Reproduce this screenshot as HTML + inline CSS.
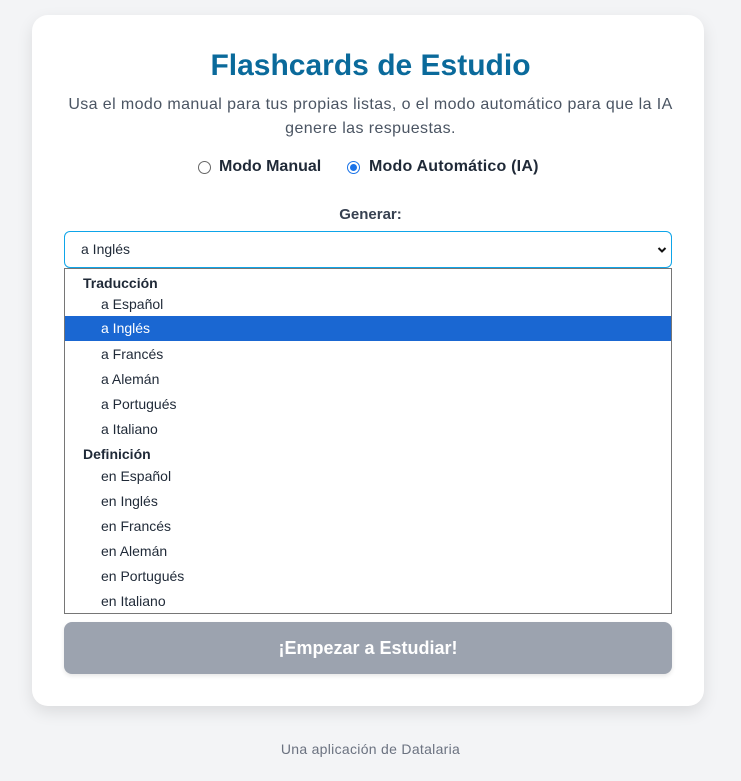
<!DOCTYPE html>
<html><head><meta charset="utf-8"><style>
*{margin:0;padding:0;box-sizing:border-box}
body{width:741px;height:781px;background:#f3f4f6;font-family:"Liberation Sans",sans-serif;position:relative;overflow:hidden}
.card{position:absolute;left:32px;top:15px;width:672px;height:691px;background:#fff;border-radius:16px;box-shadow:0 6px 16px rgba(0,0,0,0.1)}
.a{position:absolute;white-space:nowrap}
.c{left:0;width:741px;text-align:center}
.dd{position:absolute;left:64px;top:268px;width:608px;height:346px;border:1px solid #767676;background:#fff}
.o{position:absolute;left:36px;font-size:14px;color:#1f2937;line-height:20px}
.g{position:absolute;left:18px;font-size:14px;font-weight:bold;color:#1f2937;line-height:20px}
.hl{position:absolute;left:0;top:47px;width:606px;height:25px;background:#1a67d2}
</style></head><body>
<div class="card"></div>
<div class="a c" style="top:46px;font-size:30px;font-weight:bold;color:#0a6a9b;line-height:40px">Flashcards de Estudio</div>
<div class="a c" style="top:93px;font-size:16px;color:#4b5563;line-height:24px;letter-spacing:0.4px">Usa el modo manual para tus propias listas, o el modo automático para que la IA<br>genere las respuestas.</div>
<div class="a" style="left:198px;top:161px;width:13px;height:13px;border:1px solid #666;border-radius:50%"></div>
<div class="a" style="left:219px;top:157px;font-size:16px;font-weight:bold;color:#1f2937;line-height:20px">Modo Manual</div>
<div class="a" style="left:347px;top:161px;width:13px;height:13px;border:1px solid #1a73e8;border-radius:50%"><div style="position:absolute;left:2px;top:2px;width:7px;height:7px;background:#1a73e8;border-radius:50%"></div></div>
<div class="a" style="left:369px;top:157px;font-size:16px;font-weight:bold;color:#1f2937;line-height:20px;letter-spacing:0.2px">Modo Automático (IA)</div>
<div class="a c" style="top:205px;font-size:15px;font-weight:bold;color:#374151;line-height:20px">Generar:</div>
<div class="a" style="left:64px;top:231px;width:608px;height:37px;border:1px solid #0ea5e9;border-radius:6px;background:#fff">
<span style="position:absolute;left:16px;top:9px;font-size:14px;color:#1f2937">a Inglés</span>
<svg style="position:absolute;right:4px;top:14px" width="10" height="8" viewBox="0 0 10 8"><path d="M1.5 2 L5 5.5 L8.5 2" stroke="#111" stroke-width="2" fill="none"/></svg>
</div>
<div class="dd">
<div class="hl"></div>
<div class="g" style="top:4px">Traducción</div>
<div class="o" style="top:25px">a Español</div>
<div class="o" style="top:49px;color:#fff">a Inglés</div>
<div class="o" style="top:75px">a Francés</div>
<div class="o" style="top:100px">a Alemán</div>
<div class="o" style="top:125px">a Portugués</div>
<div class="o" style="top:150px">a Italiano</div>
<div class="g" style="top:175px">Definición</div>
<div class="o" style="top:197px">en Español</div>
<div class="o" style="top:222px">en Inglés</div>
<div class="o" style="top:247px">en Francés</div>
<div class="o" style="top:272px">en Alemán</div>
<div class="o" style="top:297px">en Portugués</div>
<div class="o" style="top:322px">en Italiano</div>
</div>
<div class="a" style="left:64px;top:622px;width:608px;height:52px;background:#9ca3af;border-radius:8px;box-shadow:0 2px 4px rgba(0,0,0,0.1);color:#fff;font-size:18px;font-weight:bold;text-align:center;line-height:52px">¡Empezar a Estudiar!</div>
<div class="a c" style="top:740px;font-size:14px;color:#6b7280;line-height:18px;letter-spacing:0.3px">Una aplicación de Datalaria</div>
</body></html>
